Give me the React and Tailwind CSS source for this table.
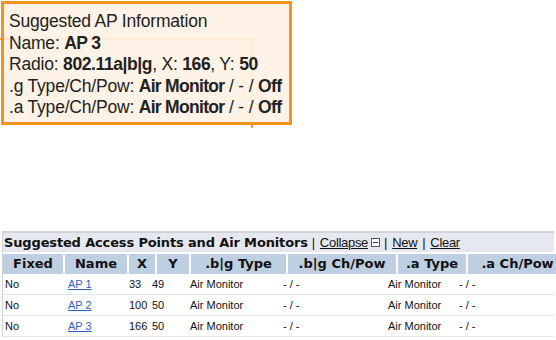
import React from "react";

const rows = [
  { fixed: "No", name: "AP 1", x: "33", y: "49" },
  { fixed: "No", name: "AP 2", x: "100", y: "50" },
  { fixed: "No", name: "AP 3", x: "166", y: "50" },
];

const heads = ["Fixed", "Name", "X", "Y", ".b|g Type", ".b|g Ch/Pow", ".a Type", ".a Ch/Pow"];

const cols = "grid grid-cols-[60px_62px_26px_32px_95px_108px_68px_99px]";

const sans = { fontFamily: '"Liberation Sans", Arial, sans-serif' };
const wide = { fontFamily: '"DejaVu Sans", Verdana, sans-serif' };

const App = () => {
  return (
    <div className="w-[556px] h-[340px] bg-white overflow-hidden">
      {/* info popup, with the faint outline of the previous position behind it */}
      <div className="relative ml-px mt-px w-[291px] h-[124px]">
        <div className="absolute left-[-4px] top-[37px] w-[256px] h-[90px] border-2 border-b-0 border-[#f39a3c]" />
        <div
          className="relative w-full h-full border-[3px] border-[#f2921f] bg-[#fff1e4]/[0.93] pl-[5px] pt-[7px] text-[17.5px] leading-[21.6px] tracking-[-0.2px] text-[#222] whitespace-nowrap"
          style={sans}
        >
          <div>Suggested AP Information</div>
          <div>
            Name: <b className="tracking-[-0.6px]">AP 3</b>
          </div>
          <div>
            Radio: <b className="tracking-[-0.4px]">802.11a|b|g</b>, X: <b className="tracking-[-0.4px]">166</b>, Y:{" "}
            <b className="tracking-[-0.4px]">50</b>
          </div>
          <div>
            .g Type/Ch/Pow: <b className="tracking-[-0.7px]">Air Monitor</b> / - / <b className="tracking-[-0.6px]">Off</b>
          </div>
          <div>
            .a Type/Ch/Pow: <b className="tracking-[-0.7px]">Air Monitor</b> / - / <b className="tracking-[-0.6px]">Off</b>
          </div>
        </div>
      </div>

      {/* access point table */}
      <div className="mt-[106px] ml-[2px] w-[552px] border-t-2 border-l border-[#cfd3d8] text-[11px] text-[#111]">
        <div
          className="h-[19px] bg-[#e5e9ef] pl-px flex items-center whitespace-nowrap text-[13px] tracking-[-0.3px]"
          style={sans}
        >
          <span className="font-bold text-[13px] tracking-[-0.15px] mr-[4px]" style={wide}>
            Suggested Access Points and Air Monitors
          </span>
          <span>|</span>
          <span className="underline ml-[5px] pr-[3px]">Collapse</span>
          <span className="w-[9px] h-[9px] border border-[#555] bg-white flex items-center justify-center">
            <span className="w-[5px] h-px bg-[#333]" />
          </span>
          <span className="ml-[4px]">|</span>
          <span className="underline ml-[5px]">New</span>
          <span className="ml-[5px]">|</span>
          <span className="underline ml-[5px]">Clear</span>
        </div>

        <div className={`${cols} gap-x-[2px] bg-white mt-[2px] h-[20px] font-bold text-[13px]`} style={wide}>
          {heads.map((h) => (
            <div key={h} className="bg-[#bfcfe2] flex items-center justify-center whitespace-nowrap">
              {h}
            </div>
          ))}
        </div>

        <div style={sans}>
          {rows.map((r) => (
            <div key={r.name} className={`${cols} h-[21px] items-center border-b border-[#e2e4e7] whitespace-nowrap`}>
              <div className="pl-[2px]">{r.fixed}</div>
              <div className="pl-[5px]">
                <span className="text-[#2f5fc7] underline">{r.name}</span>
              </div>
              <div className="pl-[4px]">{r.x}</div>
              <div className="pl-[1px]">{r.y}</div>
              <div className="pl-[7px]">Air Monitor</div>
              <div className="pl-[5px]">- / -</div>
              <div className="pl-[2px]">Air Monitor</div>
              <div className="pl-[5px]">- / -</div>
            </div>
          ))}
        </div>
      </div>
    </div>
  );
};

export default App;
